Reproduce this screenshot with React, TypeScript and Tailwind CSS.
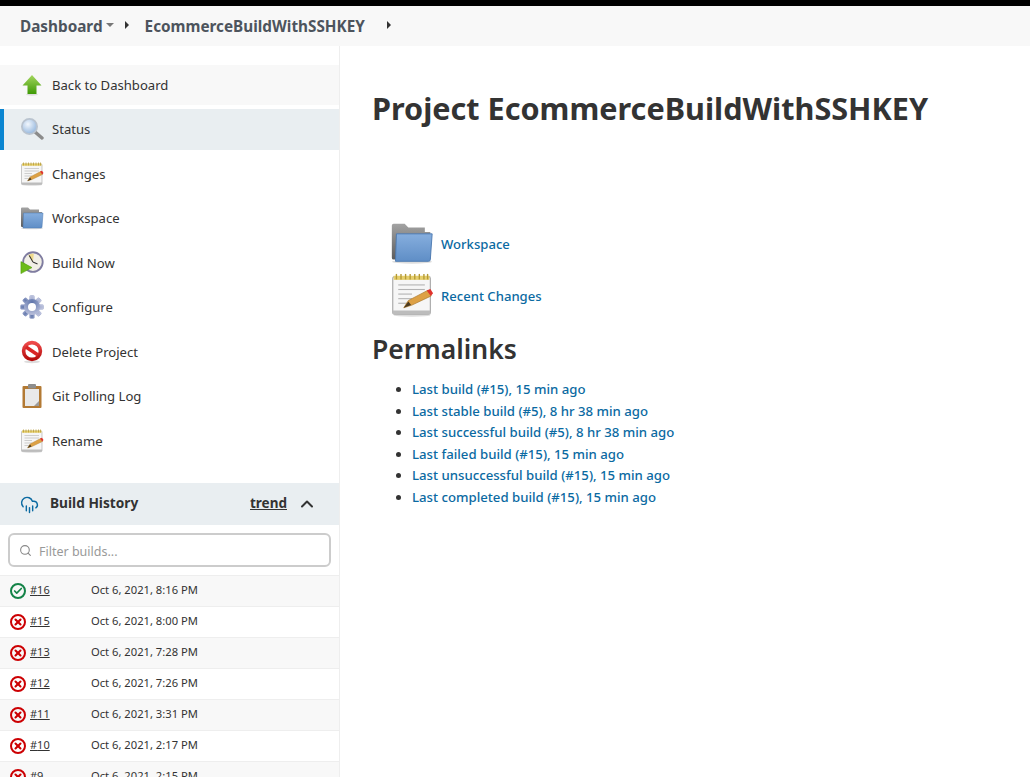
import type { ReactNode } from 'react'
import { Search, ChevronUp, CloudRain, Check, X } from 'lucide-react'

function Gradients() {
  return (
    <svg width="0" height="0" className="absolute">
      <defs>
        <linearGradient id="arrow" x1="0" y1="0" x2="0" y2="1">
          <stop offset="0" stopColor="#a4d65e" />
          <stop offset="1" stopColor="#3f9a06" />
        </linearGradient>
        <linearGradient id="folderBlue" x1="0" y1="0" x2="0" y2="1">
          <stop offset="0" stopColor="#86aede" />
          <stop offset="1" stopColor="#5f8ec6" />
        </linearGradient>
        <linearGradient id="folderGrey" x1="0" y1="0" x2="0" y2="1">
          <stop offset="0" stopColor="#a3a3a3" />
          <stop offset="1" stopColor="#5c5c5c" />
        </linearGradient>
        <radialGradient id="lens" cx="0.4" cy="0.35" r="0.7">
          <stop offset="0" stopColor="#f2f7fd" />
          <stop offset="1" stopColor="#8fb3dc" />
        </radialGradient>
        <radialGradient id="gear" cx="0.5" cy="0.2" r="0.9">
          <stop offset="0" stopColor="#5f75ab" />
          <stop offset="1" stopColor="#c6cae2" />
        </radialGradient>
        <linearGradient id="stop" x1="0" y1="0" x2="0" y2="1">
          <stop offset="0" stopColor="#ee4a4a" />
          <stop offset="1" stopColor="#b50d0d" />
        </linearGradient>
      </defs>
    </svg>
  )
}

function ArrowIcon() {
  return (
    <svg width="24" height="24" viewBox="0 0 24 24">
      <ellipse cx="12" cy="21.5" rx="6" ry="1.2" fill="#ddd" />
      <path d="M12 2 L21.5 12.5 H16.5 V21 H7.5 V12.5 H2.5 Z" fill="url(#arrow)" />
    </svg>
  )
}

function LensIcon() {
  return (
    <svg width="24" height="24" viewBox="0 0 24 24">
      <path d="M14.5 14.5 L22 21" stroke="#8b8b8b" strokeWidth="3.4" strokeLinecap="round" />
      <circle cx="9.5" cy="9.5" r="7.6" fill="url(#lens)" stroke="#b9c3cf" strokeWidth="1.8" />
    </svg>
  )
}

function NotepadIcon({ size = 24 }: { size?: number }) {
  return (
    <svg width={size} height={size} viewBox="0 0 48 48">
      <ellipse cx="24" cy="46" rx="20" ry="1.6" fill="#ddd" />
      <rect x="3" y="4" width="41" height="41" rx="2" fill="#f6f6f6" stroke="#a5a5a5" strokeWidth="1.2" />
      <path d="M3 41 H44 V45 H3 Z" fill="#bcbcbc" />
      <rect x="4" y="3" width="39" height="4.5" fill="#e6cf6c" />
      {[7, 12, 17, 22, 27, 32, 37, 41].map((x) => (
        <path key={x} d={`M${x} 1 V7`} stroke="#b59a35" strokeWidth="1.5" />
      ))}
      {[13, 18, 23, 28, 33].map((y, i) => (
        <path key={y} d={`M9 ${y} H${i >= 2 ? 24 : 38}`} stroke="#b3b3b3" strokeWidth="1.2" />
      ))}
      <path d="M15 38 L20 30 L41 19 L45 25 L24 35 Z" fill="#dda145" stroke="#a8762a" strokeWidth="0.7" />
      <path d="M15 38 L20 31 L23 35 Z" fill="#4a3a20" />
      <path d="M40 19 L44 17.5 L47 22 L44.5 25 Z" fill="#e0322d" />
    </svg>
  )
}

function FolderIcon({ size = 24 }: { size?: number }) {
  return (
    <svg width={size} height={size} viewBox="0 0 48 48">
      <ellipse cx="24" cy="44.5" rx="22" ry="2" fill="#ddd" />
      <path d="M2 5 Q2 3 4 3 H16 L20 7 H38 V12 H44 V42 H4 Q2 42 2 40 Z" fill="url(#folderGrey)" />
      <path d="M7 14 H46 L44 42 Q44 44 42 44 H6 Z" fill="url(#folderBlue)" stroke="#4a78b0" strokeWidth="1" />
    </svg>
  )
}

function ClockIcon() {
  return (
    <svg width="26" height="26" viewBox="0 0 26 26">
      <circle cx="14" cy="12" r="10.6" fill="#f1efe6" stroke="#7f7ca0" strokeWidth="2" />
      <path d="M14 12 L9 4.5 A9 9 0 0 1 15 3 Z" fill="#eed98a" />
      <path d="M14 12 L10 5 M14 12 L19 14" stroke="#333" strokeWidth="1.1" />
      <path d="M1 11.5 L13 18 L1 24.5 Z" fill="#6cbb18" stroke="#4c9a0a" strokeWidth="0.6" />
    </svg>
  )
}

function GearIcon() {
  return (
    <svg width="24" height="24" viewBox="0 0 24 24">
      <g fill="url(#gear)">
        {[0, 45, 90, 135, 180, 225, 270, 315].map((r) => (
          <rect key={r} x="9.5" y="0.5" width="5" height="23" rx="1.2" transform={`rotate(${r} 12 12)`} />
        ))}
      </g>
      <circle cx="12" cy="12" r="8" fill="url(#gear)" />
      <circle cx="12" cy="12" r="4" fill="#fff" />
    </svg>
  )
}

function StopIcon() {
  return (
    <svg width="22" height="24" viewBox="0 0 22 24">
      <ellipse cx="11" cy="21.8" rx="8" ry="1.4" fill="#ddd" />
      <circle cx="11" cy="11" r="8.4" fill="#fff" stroke="url(#stop)" strokeWidth="3.6" />
      <path d="M5 7 L17 15" stroke="#d92525" strokeWidth="3.6" />
    </svg>
  )
}

function ClipboardIcon() {
  return (
    <svg width="24" height="26" viewBox="0 0 24 26">
      <rect x="2.5" y="3" width="19" height="22" rx="1" fill="#b37a34" />
      <rect x="5" y="6" width="14" height="17" fill="#e9e9e9" />
      <path d="M14 23 L19 18 V23 Z" fill="#9c9c9c" />
      <rect x="8" y="1" width="8" height="4.5" rx="1" fill="#8e8e8e" />
    </svg>
  )
}

function Task({ icon, label, bg = '' }: { icon: ReactNode; label: string; bg?: string }) {
  return (
    <div className={`flex h-[40.5px] items-center ${bg}`}>
      <div className="ml-5 flex w-[32px] justify-start">
        <div className="flex h-6 w-6 items-center justify-center">{icon}</div>
      </div>
      <span className="mt-[2px] text-[13.1px] text-[#333]">{label}</span>
    </div>
  )
}

function BuildRow({ num, time, ok, shaded }: { num: number; time: string; ok?: boolean; shaded?: boolean }) {
  return (
    <div className={`flex h-[31px] shrink-0 items-center border-b border-[#eee] pl-[10px] ${shaded ? 'bg-[#f8f8f8]' : 'bg-white'}`}>
      <div className={`flex h-4 w-4 items-center justify-center rounded-full border-2 ${ok ? 'border-[#138347]' : 'border-[#cc0003]'}`}>
        {ok ? (
          <Check size={10} strokeWidth={4} className="text-[#138347]" />
        ) : (
          <X size={10} strokeWidth={5} className="text-[#cc0003]" />
        )}
      </div>
      <span className="ml-1 mt-[-2px] w-[61px] text-[11px] text-[#333] underline">#{num}</span>
      <span className="mt-[-2px] text-[11.2px] text-[#333]">{time}</span>
    </div>
  )
}

const builds = [
  { num: 16, time: 'Oct 6, 2021, 8:16 PM', ok: true },
  { num: 15, time: 'Oct 6, 2021, 8:00 PM' },
  { num: 13, time: 'Oct 6, 2021, 7:28 PM' },
  { num: 12, time: 'Oct 6, 2021, 7:26 PM' },
  { num: 11, time: 'Oct 6, 2021, 3:31 PM' },
  { num: 10, time: 'Oct 6, 2021, 2:17 PM' },
  { num: 9, time: 'Oct 6, 2021, 2:15 PM' },
]

const permalinks = [
  'Last build (#15), 15 min ago',
  'Last stable build (#5), 8 hr 38 min ago',
  'Last successful build (#5), 8 hr 38 min ago',
  'Last failed build (#15), 15 min ago',
  'Last unsuccessful build (#15), 15 min ago',
  'Last completed build (#15), 15 min ago',
]

export default function App() {
  return (
    <div className="flex h-[777px] w-[1030px] flex-col overflow-hidden bg-white font-['Noto_Sans',sans-serif]">
      <Gradients />
      <div className="h-[6px] shrink-0 bg-black" />

      {/* breadcrumb */}
      <div className="flex h-[40px] shrink-0 items-center bg-[#f8f8f8] pl-5 text-[15.3px] font-bold text-[#4d545d]">
        <span>Dashboard</span>
        <span className="ml-[3px] mt-[-2px] h-0 w-0 border-x-[4px] border-t-[4px] border-x-transparent border-t-[#777]" />
        <span className="ml-[11px] mt-[-3px] h-0 w-0 border-y-[4px] border-l-[4px] border-y-transparent border-l-[#333]" />
        <span className="ml-[16px]">EcommerceBuildWithSSHKEY</span>
        <span className="ml-[22px] mt-[-3px] h-0 w-0 border-y-[4px] border-l-[4px] border-y-transparent border-l-[#333]" />
      </div>

      <div className="flex min-h-0 flex-1">
        {/* side panel */}
        <div className="flex w-[340px] shrink-0 flex-col overflow-hidden border-r border-[#eee] pt-[18.5px]">
          <div className="flex flex-col gap-[4px]">
            <Task icon={<ArrowIcon />} label="Back to Dashboard" bg="bg-[#f8f8f8]" />
            <div className="border-l-4 border-[#0b85d1] bg-[#e9eef1]">
              <div className="-ml-1">
                <Task icon={<LensIcon />} label="Status" />
              </div>
            </div>
            <Task icon={<NotepadIcon />} label="Changes" />
            <Task icon={<FolderIcon />} label="Workspace" />
            <Task icon={<ClockIcon />} label="Build Now" />
            <Task icon={<GearIcon />} label="Configure" />
            <Task icon={<StopIcon />} label="Delete Project" />
            <Task icon={<ClipboardIcon />} label="Git Polling Log" />
            <Task icon={<NotepadIcon />} label="Rename" />
          </div>

          {/* build history */}
          <div className="mt-[22px] flex h-[42px] shrink-0 items-center bg-[#e9eef1] pl-5">
            <CloudRain size={19} strokeWidth={1.8} className="text-[#0b6aa2]" />
            <span className="ml-[11px] mt-[-2px] text-[13.7px] font-bold text-[#333]">Build History</span>
            <span className="ml-auto mt-[-2px] text-[13.5px] font-bold text-[#333] underline">trend</span>
            <ChevronUp size={20} strokeWidth={2.4} className="ml-[10px] mr-[22px] text-[#333]" />
          </div>
          <div className="shrink-0 px-2 pb-[8px] pt-2">
            <div className="flex h-[34px] items-center rounded-md border-2 border-[#ccc] bg-white pl-[9px]">
              <Search size={13} strokeWidth={2} className="text-[#888]" />
              <span className="ml-[7px] mt-[4px] text-[12.5px] text-[#999]">Filter builds...</span>
            </div>
          </div>
          <div className="flex flex-col border-t border-[#eee]">
            {builds.map((b, i) => (
              <BuildRow key={b.num} num={b.num} time={b.time} ok={b.ok} shaded={i % 2 === 0} />
            ))}
          </div>
        </div>

        {/* main */}
        <div className="min-w-0 flex-1 pl-[32px]">
          <h1 className="mt-[38px] text-[30.6px] font-bold leading-[48px] text-[#333] whitespace-nowrap">
            Project EcommerceBuildWithSSHKEY
          </h1>
          <div className="mt-[85px] flex flex-col pl-[18px]">
            <div className="flex h-[52px] items-center">
              <FolderIcon size={44} />
              <span className="ml-[7px] mt-[4px] text-[13.1px] font-medium text-[#0b6aa2]">Workspace</span>
            </div>
            <div className="flex h-[52px] items-center">
              <NotepadIcon size={44} />
              <span className="ml-[7px] mt-[4px] text-[13.1px] font-medium text-[#0b6aa2]">Recent Changes</span>
            </div>
          </div>
          <h2 className="mt-[8px] text-[26.5px] font-semibold leading-[40px] text-[#333]">Permalinks</h2>
          <ul className="mt-[10px] flex list-disc flex-col pl-[40px] marker:text-[#333]">
            {permalinks.map((p) => (
              <li key={p} className="h-[21.6px] text-[13.2px] font-medium leading-[21.6px] text-[#0b6aa2] whitespace-nowrap">
                {p}
              </li>
            ))}
          </ul>
        </div>
      </div>
    </div>
  )
}
